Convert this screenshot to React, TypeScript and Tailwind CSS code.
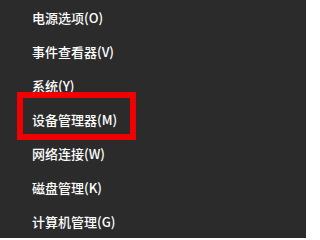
const items = [
  '电源选项(O)',
  '事件查看器(V)',
  '系统(Y)',
  '设备管理器(M)',
  '网络连接(W)',
  '磁盘管理(K)',
  '计算机管理(G)',
];

export default function App() {
  return (
    <div
      className="relative w-[306px] h-[238px] overflow-hidden bg-[#2b2b2b] text-white"
      style={{ fontFamily: '"Noto Sans CJK SC", "Noto Sans", sans-serif' }}
    >
      <ul className="flex flex-col pl-8">
        {items.map((label) => (
          <li key={label} className="h-[34px] flex items-center text-[13px] font-medium leading-none">
            {label}
          </li>
        ))}
      </ul>
      {/* red highlight around 设备管理器 */}
      <div className="absolute left-[17px] top-[92px] w-[119px] h-[48px] border-[6px] border-[#f00000]" />
    </div>
  );
}
